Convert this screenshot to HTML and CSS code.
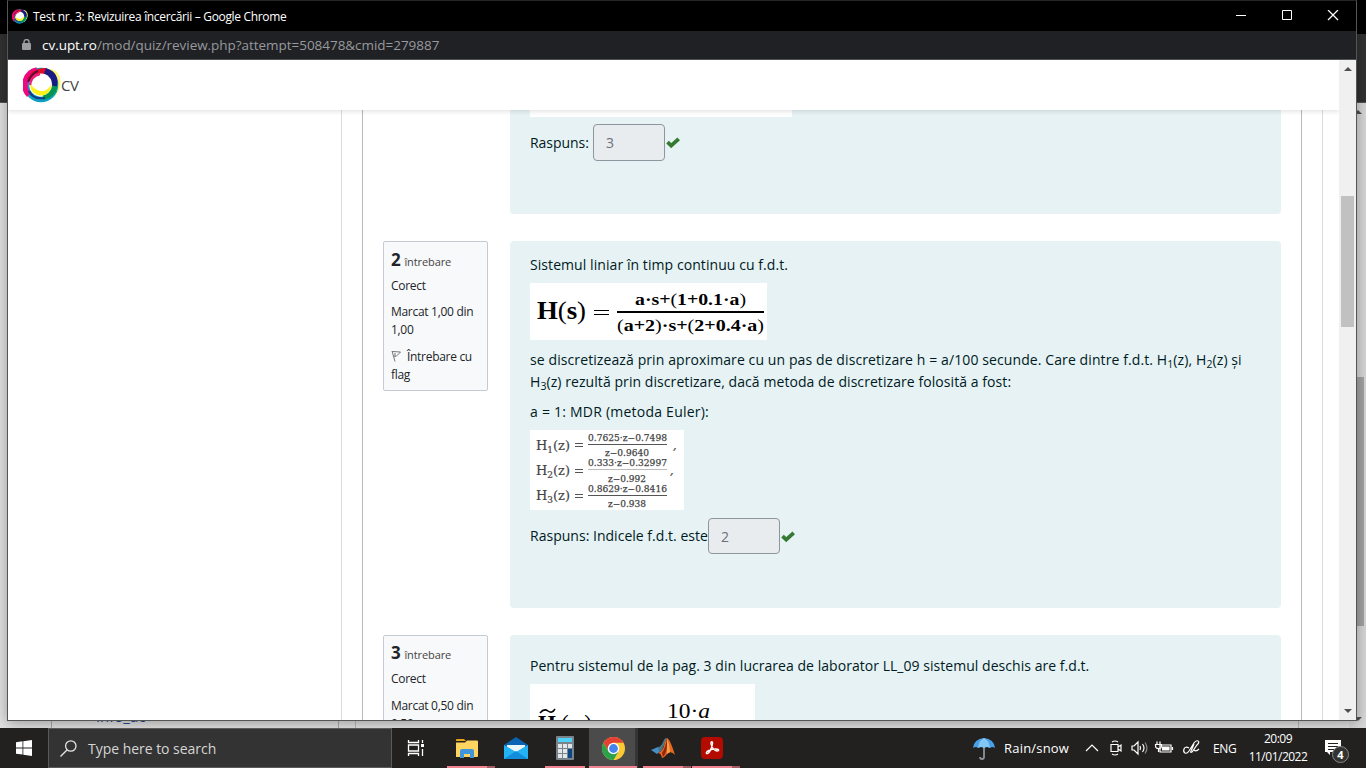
FILE: index.html
```html
<!DOCTYPE html>
<html lang="ro">
<head>
<meta charset="utf-8">
<title>Test nr. 3: Revizuirea încercării</title>
<link rel="stylesheet" href="styles.css">
</head>
<body>
<svg class="defs" width="0" height="0">
  <symbol id="ring" viewBox="0 0 38 36">
    <path d="M27 3Q38 6 36 18Q35 25 29 30" fill="none" stroke="#fbf66a" stroke-width="2.500"/>
    <circle cx="18" cy="18" r="14.500" fill="none" stroke="#0c9fc6" stroke-width="5.500"/>
    <path d="M6 28A15 15 0 0 1 14 3" fill="none" stroke="#ed087d" stroke-width="5.500"/>
    <path d="M7 13Q12 3 23 4" fill="none" stroke="#e3092a" stroke-width="6"/>
    <path d="M5 15Q9 6 15 4" fill="none" stroke="#5c0b3c" stroke-width="2"/>
    <path d="M22 4Q34 8 30.500 20" fill="none" stroke="#191b80" stroke-width="6.500"/>
    <path d="M31.500 19Q30 28 20 30" fill="none" stroke="#06954d" stroke-width="6"/>
    <path d="M6 24Q10 33 22 31" fill="none" stroke="#123c83" stroke-width="2"/>
    <circle cx="18" cy="17.500" r="11" fill="#fff"/>
    <path d="M7 15Q7 28 18 28.500Q28 28 28.500 17Q24 25 18 24Q10 23 7 15z" fill="#fff21b"/>
    <path d="M7 18Q8 9 17 7" fill="none" stroke="#ef1c79" stroke-width="2.500"/>
  </symbol>
  <symbol id="check" viewBox="0 0 14 11"><path d="M1.500 5.200L5.200 8.600L12.700 1.800" fill="none" stroke="#357a32" stroke-width="3.800"/></symbol>
</svg>
<div class="desktop">
  <div class="back-window">
    <div class="back-title"></div>
    <div class="back-tools"></div>
    <div class="back-page"><div class="back-col"><span>› &nbsp;info_ac</span></div><div class="back-main"></div><div class="back-scroll"><i class="up"></i><b></b><i class="down"></i></div></div>
  </div>

  <div class="window">
    <div class="titlebar">
      <svg class="favicon"><use href="#ring"/></svg>
      <span class="title">Test nr. 3: Revizuirea încercării – Google Chrome</span>
      <svg class="controls" width="104" height="12" viewBox="0 0 104 12" fill="none" stroke="#fff"><path d="M0 5.500h10"/><path d="M46.500 .5h9v9h-9z"/><path d="M92 0l10 10M102 0L92 10" stroke-width="1.300"/></svg>
    </div>
    <div class="urlbar">
      <svg width="9" height="12" viewBox="0 0 9 12"><rect y="4" width="9" height="7" rx="1" fill="#9a9da1"/><path d="M2 5V3a2.500 2.500 0 0 1 5 0v2" fill="none" stroke="#9a9da1" stroke-width="1.400"/></svg>
      <span class="url"><b>cv.upt.ro</b>/mod/quiz/review.php?attempt=508478&amp;cmid=279887</span>
    </div>
    <div class="viewport">
      <div class="page">
        <header class="nav"><svg class="logo"><use href="#ring"/></svg><span>CV</span></header>
        <div class="layout">
          <aside class="side"></aside>
          <main class="region">
            <div class="quiz">
              <section class="question q1">
                <div class="formulation">
                  <div class="cut-image"></div>
                  <div class="answer"><span class="t-ans">Raspuns:</span><span class="field">3</span><svg class="check"><use href="#check"/></svg></div>
                </div>
              </section>
              <section class="question q2">
                <div class="info">
                  <div class="no"><b>2</b><span>întrebare</span></div>
                  <div class="state">Corect</div>
                  <div class="grade">Marcat 1,00 din<br>1,00</div>
                  <div class="flag"><svg width="11" height="12" viewBox="0 0 11 12" fill="none" stroke="#777"><path d="M1 1l3 10.500M1 1.500L9.500 2 5 6.500 2.500 6M4 3v3"/></svg><span>Întrebare cu</span><br>flag</div>
                </div>
                <div class="formulation">
                  <p class="t-sys">Sistemul liniar în timp continuu cu f.d.t.</p>
                  <svg class="eq" width="237" height="57" font-family="'Liberation Serif', serif" font-weight="bold">
                    <text x="7" y="36" font-size="25" textLength="49" lengthAdjust="spacingAndGlyphs">H<tspan font-weight="normal">(</tspan>s<tspan font-weight="normal">)</tspan></text>
                    <path d="M64 27.500h15M64 31.500h15" stroke="#000"/>
                    <text x="105" y="22" font-size="17" textLength="111" lengthAdjust="spacingAndGlyphs">a·s+<tspan font-weight="normal">(</tspan>1+0.1·a<tspan font-weight="normal">)</tspan></text>
                    <path d="M87 29h147" stroke="#000" stroke-width="2"/>
                    <text x="87" y="48" font-size="17" textLength="147" lengthAdjust="spacingAndGlyphs"><tspan font-weight="normal">(</tspan>a+2<tspan font-weight="normal">)</tspan>·s+<tspan font-weight="normal">(</tspan>2+0.4·a<tspan font-weight="normal">)</tspan></text>
                  </svg>
                  <p class="long"><span class="t-l1">se discretizează prin aproximare cu un pas de discretizare h = a/100 secunde. Care dintre f.d.t. H<sub>1</sub>(z), H<sub>2</sub>(z) și</span><br><span class="t-l2">H<sub>3</sub>(z) rezultă prin discretizare, dacă metoda de discretizare folosită a fost:</span></p>
                  <p class="t-mdr">a = 1: MDR (metoda Euler):</p>
                  <svg class="eq" width="154" height="80" font-family="'DejaVu Serif', serif" fill="#444">
                    <g font-size="13" stroke="#444" stroke-width=".2">
                      <text x="6" y="20" textLength="34" lengthAdjust="spacingAndGlyphs">H<tspan font-size="9" dy="3">1</tspan><tspan dy="-3">(z)</tspan></text>
                      <text x="6" y="45" textLength="34" lengthAdjust="spacingAndGlyphs">H<tspan font-size="9" dy="3">2</tspan><tspan dy="-3">(z)</tspan></text>
                      <text x="6" y="70" textLength="34" lengthAdjust="spacingAndGlyphs">H<tspan font-size="9" dy="3">3</tspan><tspan dy="-3">(z)</tspan></text>
                    </g>
                    <path d="M45 13.500h8M45 16.500h8M45 39.500h8M45 42.500h8M45 64.500h8M45 67.500h8M58 14.500h79M58 65.500h79" stroke="#555"/>
                    <path d="M58 39.500h79" stroke="#bbb"/>
                    <g font-size="9" stroke="#444" stroke-width=".25">
                      <text x="58" y="11" textLength="79" lengthAdjust="spacingAndGlyphs">0.7625·z−0.7498</text>
                      <text x="75" y="26" textLength="44" lengthAdjust="spacingAndGlyphs">z−0.9640</text>
                      <text x="58" y="36" textLength="79" lengthAdjust="spacingAndGlyphs">0.333·z−0.32997</text>
                      <text x="78" y="52" textLength="38" lengthAdjust="spacingAndGlyphs">z−0.992</text>
                      <text x="58" y="62" textLength="79" lengthAdjust="spacingAndGlyphs">0.8629·z−0.8416</text>
                      <text x="78" y="77" textLength="38" lengthAdjust="spacingAndGlyphs">z−0.938</text>
                      <text x="143" y="19" font-size="11" font-style="italic">,</text><text x="140" y="44" font-size="11" font-style="italic">,</text>
                    </g>
                  </svg>
                  <div class="answer"><span class="t-idx">Raspuns: Indicele f.d.t. este</span><span class="field">2</span><svg class="check"><use href="#check"/></svg></div>
                </div>
              </section>
              <section class="question q3">
                <div class="info">
                  <div class="no"><b>3</b><span>întrebare</span></div>
                  <div class="state">Corect</div>
                  <div class="grade">Marcat 0,50 din<br>0,50</div>
                </div>
                <div class="formulation">
                  <p class="t-pen">Pentru sistemul de la pag. 3 din lucrarea de laborator LL_09 sistemul deschis are f.d.t.</p>
                  <svg class="eq" width="225" height="60" font-family="'Liberation Serif', serif">
                    <path d="M10 29q4-5 8-2t7-2" fill="none" stroke="#000" stroke-width="1.500"/>
                    <text x="8" y="47" font-size="23" font-weight="bold">H</text>
                    <text x="31" y="47" font-size="23" textLength="31">(s)</text>
                    <text x="137" y="34" font-size="21" textLength="43" lengthAdjust="spacingAndGlyphs">10·<tspan font-style="italic">a</tspan></text>
                  </svg>
                </div>
              </section>
            </div>
          </main>
        </div>
      </div>
      <div class="scrollbar"><i class="up"></i><b></b><i class="down"></i></div>
    </div>
  </div>

  <footer class="taskbar">
    <div class="start"><svg width="16" height="16" viewBox="0 0 16 16" fill="#fff"><path d="M0 2.200l6.500-.9v6.200H0zM7.300 1.200L16 0v7.500H7.300zM0 8.400h6.500v6.200L0 13.800zM7.300 8.400H16V16l-8.700-1.200z"/></svg></div>
    <div class="search"><svg width="17" height="17" viewBox="0 0 17 17" fill="none" stroke="#e4e4e4" stroke-width="1.300"><circle cx="10.800" cy="6" r="5.200"/><path d="M7.200 9.800L.5 16.500"/></svg><span>Type here to search</span></div>
    <div class="app"><svg class="taskview" width="18" height="16" viewBox="0 0 18 16" fill="none" stroke="#fff" stroke-width="1.300"><path d="M1.500 0v2.500h10V0M1.500 5h10v6h-10zM1.500 16v-2.500h10V16M15.500 0v3M15.500 9v7"/><path d="M14 4h3v3h-3z" fill="#fff" stroke="none"/></svg></div>
    <div class="app run stack files"><svg width="22" height="19" viewBox="0 0 22 19"><path d="M0 1q0-1 1-1h7l2 2H0z" fill="#e5a318"/><path d="M0 3.500h9l2-2h10q1 0 1 1V17q0 1-1 1H0z" fill="#fdd45f"/><path d="M4 19v-7q0-2 2-2h10q2 0 2 2v7h-4v-4H8v4z" fill="#3f95dc"/></svg></div>
    <div class="app"><svg width="24" height="22" viewBox="0 0 24 22"><path d="M0 8L12 0l12 8v3H0z" fill="#0963b2"/><path d="M3 8h18v2l-9 6-9-6z" fill="#e9f4fb"/><path d="M0 8l12 7 12-7v14H0z" fill="#23b3f5"/><path d="M0 22l12-8 12 8z" fill="#128ddb"/></svg></div>
    <div class="app run"><svg width="18" height="24" viewBox="0 0 18 24"><rect width="18" height="24" rx="1" fill="#78838b"/><path d="M2 2h14v4H2z" fill="#4fd2f7"/><path d="M2 8h4v4H2zM7 8h4v4H7zM12 8h4v4h-4zM2 13h4v4H2zM7 13h4v4H7zM2 18h4v4H2zM7 18h4v4H7z" fill="#e2e6e9"/><path d="M12 13h4v9h-4z" fill="#0d4684"/></svg></div>
    <div class="app run active"><svg width="23" height="23" viewBox="0 0 24 24"><circle cx="12" cy="12" r="12" fill="#fbc934"/><path d="M1.600 6A12 12 0 0 1 22.400 6H12L6.800 15z" fill="#e34133"/><path d="M1.600 6A12 12 0 0 0 12 24l5.200-9-10.400 0z" fill="#2ba14b"/><circle cx="12" cy="12" r="6" fill="#fff"/><circle cx="12" cy="12" r="4.600" fill="#4584ed"/></svg></div>
    <div class="app run stack"><svg width="24" height="20" viewBox="0 0 24 20"><path d="M0 12l7-3 4 3-5 4z" fill="#458fc8"/><path d="M7 9q3 0 5-5t4-4l-5 12-3 2z" fill="#4c7483"/><path d="M16 0q3 1 8 17-4-5-8-1-3 4-5 4-1-5-4-5 5-2 6-7t3-8z" fill="#e56924"/><path d="M16 0q-1 9-5 15l1 4q5-5 4-19z" fill="#94230f"/><path d="M16 1q3 6 3 13l-3 2z" fill="#f7a345"/></svg></div>
    <div class="app run stack"><svg width="22" height="22" viewBox="0 0 22 22"><rect width="22" height="22" rx="4" fill="#b30b00"/><path d="M5.500 16.500c-1.500-2 5-4.500 9-4.500s4 2 1.500 2-5.500-4-6-7 2-3 1.500 0-3.500 11-6 9.500z" fill="none" stroke="#fff" stroke-width="1.400"/></svg></div>
    <div class="tray">
      <svg class="umb" width="22" height="23" viewBox="0 0 22 23"><path d="M11 7v13q0 2-2 2t-2-2" fill="none" stroke="#8b949b" stroke-width="1.800"/><path d="M0 11Q1 2 11 1q10 1 11 10-3-2-5 0-3-2-6 0-3-2-6 0-2-2-5 0z" fill="#4aa0e6"/><path d="M5 11q1-8 6-10 5 2 6 10-3-2-6 0-3-2-6 0z" fill="#83c6f4"/></svg>
      <span class="weather">Rain/snow</span>
      <svg class="icons" width="116" height="18" viewBox="0 0 116 18" fill="none" stroke="#fff" stroke-width="1.200"><path d="M1 12l6-6 6 6"/><path d="M26 5.500h7v7h-7zM33 8l3-2v6l-3-2M27 3q3-2 6 0M27 15q3 2 6 0"/><path d="M47 7h2l4-4v12l-4-4h-2zM55 7q1 2 0 4M57.500 5q3 4 0 8"/><path d="M60 3.500q4 5.500 0 11" stroke="#888"/><path d="M75 6h11v7H75zM87.500 8v3"/><path d="M77.500 8h6.500v3h-6.500z" fill="#fff"/><path d="M72 2.500v3M75 2.500v3M70.500 5.500h6v1.500q0 2.500-3 2.500T70.500 7zM73.500 10v3"/><path d="M104 9q-4-2-5 1t1 4 4-2l5-8q2-3 4-2t-1 4l-5 7q-2 1-1-1l3-7M109 11q2 2 5-1"/></svg>
      <span class="lang">ENG</span>
      <div class="clock"><span>20:09</span><span>11/01/2022</span></div>
      <div class="note"><svg width="17" height="16" viewBox="0 0 17 16"><path d="M0 0h16v12H5v3l-3-3H0z" fill="#fff"/><path d="M3 3.500h10M3 6.500h10M3 9.500h6" stroke="#222"/></svg><em>4</em></div>
    </div>
  </footer>
</div>
</body>
</html>
```
FILE: styles.css
```css
* { box-sizing: border-box; }
body { margin: 0; font-family: "Open Sans", "Noto Sans", sans-serif; }
.defs { position: absolute; }
svg { display: block; flex: none; }
.desktop { position: relative; width: 1366px; height: 768px; overflow: hidden; background: #202020; }

.back-window { position: absolute; inset: 0 0 40px 0; display: flex; flex-direction: column; background: #e4e4e4; }
.back-title { height: 34px; background: #000; }
.back-tools { height: 69px; background: #323232; border-bottom: 1px solid #555; }
.back-page { flex: 1; display: flex; padding-left: 51px; }
.back-col { width: 288px; border: solid #aaa; border-width: 0 1px; display: flex; align-items: flex-end; padding-left: 32px; }
.back-col span { font-size: 15px; line-height: 24px; color: #1b4a94; }
.back-main { width: 944px; margin-left: 16px; border: solid #bbb; border-width: 0 1px; }
.back-scroll { margin-left: auto; width: 17px; background: #d9d9d9; display: flex; flex-direction: column; align-items: center; padding: 7px 2px; }
.back-scroll b { width: 13px; height: 249px; background: #a5a5a5; margin-top: 263px; }
.back-scroll .down { margin-top: auto; }

.window { position: absolute; left: 7px; top: 0; width: 1350px; height: 721px; border: 1px solid #555; border-top-color: #252525; box-shadow: 0 2px 14px rgba(0,0,0,.35); display: flex; flex-direction: column; background: #fff; }
.titlebar { height: 30px; background: #000; display: flex; align-items: center; padding: 0 16px 0 4px; color: #fff; }
.favicon { width: 16px; height: 15px; }
.title { font-size: 12px; letter-spacing: -.33px; margin-left: 5px; white-space: nowrap; }
.controls { margin-left: auto; }
.urlbar { height: 29px; background: #202124; border-bottom: 1px solid #505154; display: flex; align-items: center; padding-left: 14px; color: #97999d; }
.url { font-size: 13.500px; margin-left: 11px; white-space: nowrap; letter-spacing: -.04px; }
.url b { font-weight: 400; color: #fff; }
.viewport { flex: 1; min-height: 0; display: flex; }
.page { width: 1331px; display: flex; flex-direction: column; overflow: hidden; }
.nav { height: 50px; flex: none; display: flex; align-items: center; padding-left: 15px; background: #fff; box-shadow: 0 2px 4px rgba(0,0,0,.1); position: relative; z-index: 1; color: #444; font-size: 15px; }
.nav span { letter-spacing: -.5px; }
.logo { width: 38px; height: 36px; }
.layout { flex: 1; min-height: 0; display: flex; }
.side { width: 333px; }
.region { width: 982px; border: solid #dcdcdc; border-width: 0 1px; padding: 0 20px; }
.quiz { border: solid #b9b9b9; border-width: 0 1px; padding: 0 20px; height: 610px; overflow: hidden; }
.question { display: flex; align-items: flex-start; justify-content: space-between; }
.q1 { justify-content: flex-end; margin-bottom: 27px; }
.q2 { margin-bottom: 27px; }
.info { width: 105px; height: 150px; border: 1px solid #c5cbd2; border-radius: 2px; background: #f8f9fa; padding: 7px 7px; font-size: 12px; line-height: 18px; color: #212529; white-space: nowrap; letter-spacing: -.3px; }
.no { height: 28px; line-height: 22px; display: flex; gap: 4px; align-items: baseline; }
.no b { font-size: 17px; }
.no span { font-size: 11px; letter-spacing: -.1px; color: #444; }
.q3 .info { padding-top: 6px; }
.state { margin-bottom: 8px; }
.q3 .state { margin-bottom: 9px; }
.grade { margin-bottom: 9px; }
.flag svg { display: inline-block; vertical-align: -1px; margin-right: 5px; }
.formulation { width: 771px; background: #e6f2f4; border-radius: 4px; color: #001a1e; padding: 13px 20px 0; font-size: 14px; line-height: 22px; }
.q1 .formulation { height: 104px; padding-top: 0; border-radius: 0 0 4px 4px; }
.q2 .formulation { height: 367px; }
.q3 .formulation { height: 140px; padding-top: 20px; }
.formulation p { margin: 0; white-space: nowrap; }
.formulation .eq { margin-top: 7px; background: #fff; }
.formulation .long { margin: 9px 0 8px; }
sub { font-size: 10.500px; line-height: 0; vertical-align: -3px; }
.cut-image { width: 262px; height: 7px; background: #fff; margin-bottom: 7px; }
.answer { display: flex; align-items: center; white-space: nowrap; }
.q2 .answer { margin-top: 8px; }
.field { width: 72px; height: 37px; border: 1px solid #8f959e; border-radius: 4px; background: #e9ecef; color: #6a7078; padding: 7px 12px; }
.q2 .field { height: 36px; }
.check { width: 14px; height: 11px; margin-left: 1px; }
.t-ans { width: 63px; letter-spacing: -.05px; }
.t-idx { width: 178px; letter-spacing: .02px; }
.t-sys { letter-spacing: .07px; }
.t-l1 { letter-spacing: .1px; }
.t-l2 { letter-spacing: .07px; }
.t-mdr { letter-spacing: .23px; }
.t-pen { letter-spacing: .04px; }

.scrollbar { width: 17px; background: #f0f0f0; display: flex; flex-direction: column; align-items: center; padding: 7px 2px; }
.scrollbar b { width: 13px; height: 131px; background: #c1c1c1; margin-top: 125px; }
.scrollbar .down { margin-top: auto; }
.up, .down { width: 0; border: solid transparent; border-width: 0 4px; }
.up { border-bottom: 4px solid #505050; }
.down { border-top: 4px solid #505050; }

.taskbar { position: absolute; left: 0; right: 0; bottom: 0; height: 40px; background: #222120; display: flex; color: #fff; }
.start { width: 48px; display: flex; align-items: center; justify-content: center; }
.search { width: 344px; background: #333; border: 1px solid #5a5a5a; display: flex; align-items: center; padding-left: 11px; gap: 11px; color: #d5d5d5; font-size: 14px; letter-spacing: -.03px; }
.app { width: 49px; display: flex; align-items: center; justify-content: center; position: relative; }
.taskview { margin-right: 2px; }
.files { margin-left: 1px; }
.run::after { content: ""; position: absolute; left: 5px; width: 40px; bottom: 0; height: 2px; background: #f28390; }
.stack::after { border-right: 8px solid #a35d65; }
.active { background: #4b4b4b; border-right: 3px solid #353535; padding-left: 3px; }
.active::after { left: 0; width: 48px; }
.tray { margin-left: auto; display: flex; align-items: center; white-space: nowrap; font-size: 13px; padding-right: 17px; }
.weather { width: 65px; margin-left: 9px; letter-spacing: .2px; }
.icons { margin-left: 16px; }
.lang { width: 25px; margin-left: 12px; font-size: 12px; letter-spacing: -.3px; }
.clock { width: 60px; margin-left: 10px; font-size: 12px; line-height: 18px; letter-spacing: -.5px; display: flex; flex-direction: column; align-items: center; }
.note { position: relative; margin-left: 17px; width: 24px; height: 16px; }
.note em { position: absolute; left: 7px; top: 6px; width: 17px; height: 17px; border: 1px solid #888; border-radius: 50%; background: #333; font: bold 11px/15px "Open Sans", sans-serif; text-align: center; }
```
